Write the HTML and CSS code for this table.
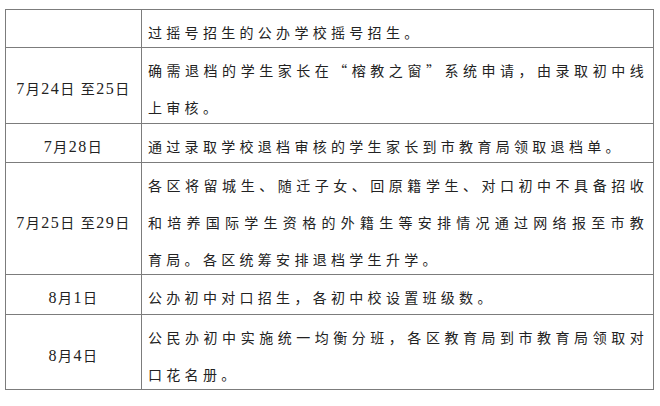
FILE: index.html
```html
<!DOCTYPE html>
<html lang="zh-CN">
<head>
<meta charset="utf-8">
<title>招生工作日程</title>
<link rel="stylesheet" href="styles.css">
</head>
<body>
<div class="page">
  <table class="schedule">
    <colgroup><col class="col-date"><col class="col-desc"></colgroup>
    <tbody>
      <tr>
        <td class="date"></td>
        <td class="desc"><div class="lines"><div>过摇号招生的公办学校摇号招生。</div></div></td>
      </tr>
      <tr>
        <td class="date"><div class="lines"><span class="num">7</span>月<span class="num">24</span>日 至<span class="num">25</span>日</div></td>
        <td class="desc"><div class="lines"><div class="full">确需退档的学生家长在<span class="q">“</span>榕教之窗<span class="q">”</span>系统申请，由录取初中线</div><div>上审核。</div></div></td>
      </tr>
      <tr>
        <td class="date"><div class="lines"><span class="num">7</span>月<span class="num">28</span>日</div></td>
        <td class="desc"><div class="lines"><div>通过录取学校退档审核的学生家长到市教育局领取退档单。</div></div></td>
      </tr>
      <tr>
        <td class="date"><div class="lines"><span class="num">7</span>月<span class="num">25</span>日 至<span class="num">29</span>日</div></td>
        <td class="desc"><div class="lines"><div class="full">各区将留城生、随迁子女、回原籍学生、对口初中不具备招收</div><div class="full">和培养国际学生资格的外籍生等安排情况通过网络报至市教</div><div>育局。各区统筹安排退档学生升学。</div></div></td>
      </tr>
      <tr>
        <td class="date"><div class="lines"><span class="num">8</span>月<span class="num">1</span>日</div></td>
        <td class="desc"><div class="lines"><div>公办初中对口招生，各初中校设置班级数。</div></div></td>
      </tr>
      <tr>
        <td class="date"><div class="lines"><span class="num">8</span>月<span class="num">4</span>日</div></td>
        <td class="desc"><div class="lines"><div class="full">公民办初中实施统一均衡分班，各区教育局到市教育局领取对</div><div>口花名册。</div></div></td>
      </tr>
    </tbody>
  </table>
</div>
</body>
</html>
```
FILE: styles.css
```css
html, body {
  margin: 0;
  padding: 0;
  background: #ffffff;
}

.page {
  padding: 9px 0 0 5px;
}

.schedule {
  border-collapse: collapse;
  table-layout: fixed;
  width: 649px;
  color: #222222;
}

.col-date {
  width: 136px;
}

.schedule td {
  border: 1px solid #7c7c7c;
  padding: 0;
}

.lines {
  padding-top: 4px;
  margin-bottom: -4px;
  line-height: 37.2px;
  white-space: nowrap;
}

.date {
  text-align: center;
  vertical-align: middle;
  font-family: "Liberation Serif", "Noto Sans CJK SC", serif;
  font-size: 14px;
  letter-spacing: 1.5px;
}

.num {
  font-size: 16px;
}

.desc {
  padding: 0 5px 0 6px !important;
  vertical-align: top;
  font-family: "Noto Sans CJK SC", sans-serif;
  font-size: 14px;
  letter-spacing: 4.3px;
}

.full {
  text-align: justify;
  text-align-last: justify;
}

.q {
  font-feature-settings: "fwid" 1;
}
```
